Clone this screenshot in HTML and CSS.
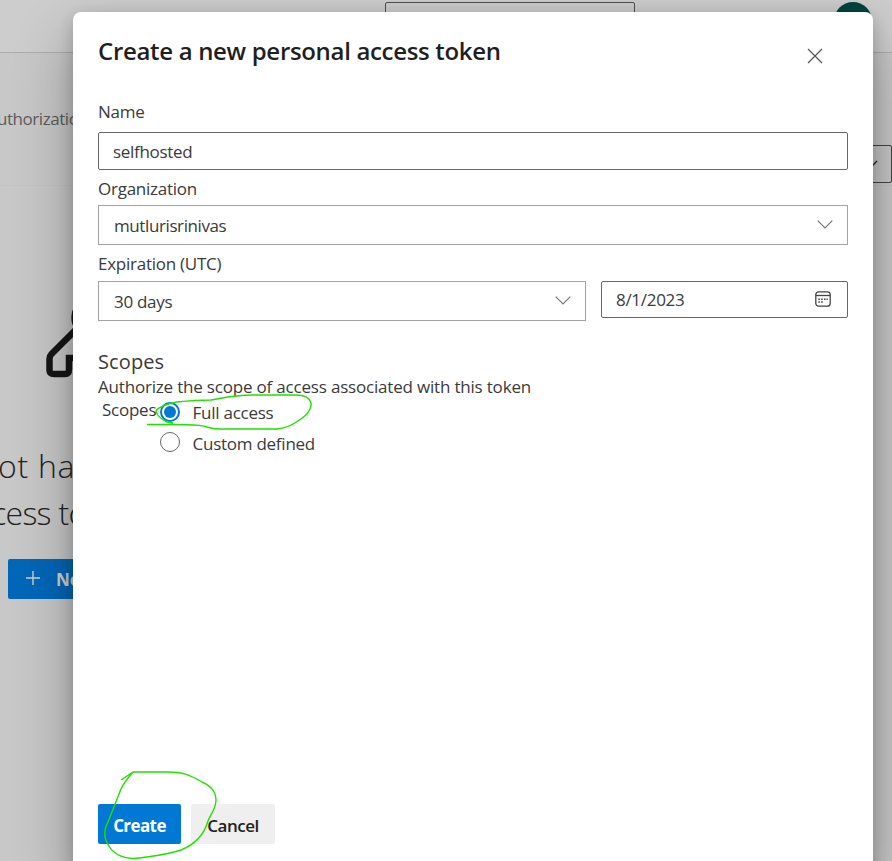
FILE: index.html
```html
<!DOCTYPE html>
<html lang="en">
<head>
<meta charset="utf-8">
<title>Create a new personal access token</title>
<link rel="stylesheet" href="styles.css">
</head>
<body>
<div class="page">
  <header class="topbar"><div class="search"></div><div class="avatar"></div></header>
  <div class="toolbar">
    <span class="crumb">uthorization</span>
    <div class="filter"><svg width="14" height="9" viewBox="0 0 14 9"><path d="M1 1l6 6 6-6"/></svg></div>
  </div>
  <main class="empty">
    <svg class="key" width="80" height="80" viewBox="0 0 80 80"><path d="M29 24C26 6 40 3 52 3s24 10 24 24-10 24-24 24h-6v9H23v11q0 5-4 5H8q-4.500 0-4.500-4V61q0-3 2-5l26-26z"/></svg>
    <p class="line first">ot have</p>
    <p class="line second">cess tokens</p>
    <div class="new"><svg width="16" height="16" viewBox="0 0 16 16"><path d="M8 1v14M1 8h14"/></svg><span>New Token</span></div>
  </main>
</div>

<section class="modal">
  <header class="head">
    <h1><span>Create a new personal access token</span></h1>
    <svg class="close" width="16" height="16" viewBox="0 0 16 16"><path d="M1 1l14 14M15 1L1 15"/></svg>
  </header>
  <div class="body">
    <div class="label name"><span>Name</span></div>
    <div class="input text"><span class="selfhosted">selfhosted</span></div>
    <div class="label org"><span>Organization</span></div>
    <div class="input select"><span class="account">mutlurisrinivas</span><svg width="16" height="9" viewBox="0 0 16 9"><path d="M.7.7L8 8l7.300-7.300"/></svg></div>
    <div class="label exp"><span>Expiration (UTC)</span></div>
    <div class="dates">
      <div class="input select days"><span>30 days</span><svg width="16" height="9" viewBox="0 0 16 9"><path d="M.7.7L8 8l7.300-7.300"/></svg></div>
      <div class="input date"><span>8/1/2023</span>
        <svg class="calendar" width="16" height="16" viewBox="0 0 16 16"><rect x=".8" y=".8" width="14.400" height="14.400" rx="2.800"/><path d="M1 4.500h14"/><path class="dots" d="M6.200 8.200h1.600M9 8.200h1.600M11.500 8.200h1.300M3.300 11h1.600M6.200 11h1.600M3.300 8.200h1.600"/></svg>
      </div>
    </div>
    <h2><span>Scopes</span></h2>
    <p class="hint"><span>Authorize the scope of access associated with this token</span></p>
    <div class="scopes">
      <span class="scope-label">Scopes</span>
      <div class="options">
        <div class="option"><i class="radio on"></i><span class="full">Full access</span></div>
        <div class="option"><i class="radio"></i><span class="custom">Custom defined</span></div>
      </div>
    </div>
  </div>
  <footer class="foot">
    <div class="btn primary"><span>Create</span></div>
    <div class="btn"><span>Cancel</span></div>
  </footer>
</section>

<svg class="ink" width="892" height="861" viewBox="0 0 892 861">
  <path d="M147 424.500H173C190 425 201 424 207 427Q213 429 219 429H277Q288 428 298 421C308 415 312 408 311 403Q309 395 296 395H252C235 395 223 398 211 400Q196 400 177 402Q160 405 156 411Q157 417 167 422L173 423"/>
  <path d="M121 780L133 772H167C183 772 190 775 202 782C213 787 216 793 216 801C215 811 210 815 208 821C204 835 196 844 181 850C167 855 152 856 139 858C126 860 114 855 109 846C103 837 104 830 108 822L121 789Q123 784 133 772"/>
</svg>
</body>
</html>
```

FILE: styles.css
```css
* { box-sizing: border-box; }
body { margin: 0; width: 892px; height: 861px; overflow: hidden; position: relative; font-family: "Open Sans", "Noto Sans", sans-serif; font-size: 16px; font-weight: 400; color: #3a3a3a; background: #c8c8c8; }
svg { display: block; fill: none; flex: none; }
p, h1, h2 { margin: 0; font-weight: 400; }
span { white-space: nowrap; }

.page { height: 861px; overflow: hidden; }
.topbar { height: 53px; display: flex; justify-content: flex-end; padding: 2px 20px 0 0; border-bottom: 1px solid #adadad; background: #cdcdcd; }
.search { width: 250px; height: 38px; margin-right: 199px; border: 1px solid #505050; border-radius: 2px; }
.avatar { width: 38px; height: 38px; border-radius: 50%; background: #00443f; }
.toolbar { height: 133px; display: flex; justify-content: space-between; align-items: flex-start; border-bottom: 1px solid #c4c4c4; }
.crumb { margin: 54px 0 0 -3px; font-size: 17px; line-height: 24px; letter-spacing: -.45px; color: #5c5c5c; }
.filter { width: 100px; height: 38px; margin-top: 92px; border: 1px solid #444; border-radius: 2px; display: flex; align-items: center; justify-content: flex-end; padding-right: 13px; }
.filter svg { stroke: #222; stroke-width: 1.3; }
.key { margin: 113px 0 -1px 46px; }
.key path { stroke: #161616; stroke-width: 6.5; }
.empty { display: flow-root; margin-top: -1px; }
.line { font-size: 32px; line-height: 47px; font-weight: 300; color: #222; white-space: nowrap; }
.first { margin: 65px 0 0 -2px; letter-spacing: .7px; }
.second { margin-left: -9px; letter-spacing: -.7px; }
.new { width: 140px; height: 40px; margin: 23px 0 0 8px; padding-left: 17px; display: flex; align-items: center; gap: 15px; background: #0067b8; color: #d0d0d0; border-radius: 2px; font-size: 17px; font-weight: 700; }
.new svg { stroke: #d0d0d0; stroke-width: 1.4; margin-bottom: 3px; }

.modal { position: absolute; left: 73px; top: 12px; width: 800px; height: 860px; padding: 0 25px; display: flex; flex-direction: column; background: #fff; border-radius: 8px; box-shadow: 0 25px 58px rgba(0,0,0,.3), 0 5px 16px rgba(0,0,0,.2); }
.head { height: 88px; display: flex; justify-content: space-between; padding: 23px 25.5px 0 0; }
h1 { font-size: 24px; line-height: 32px; font-weight: 600; color: #1f1f1f; letter-spacing: -.32px; }
.close { margin-top: 13px; stroke: #555; stroke-width: 1.2; }
.body { flex: 1; }
.label { line-height: 24px; font-size: 17px; letter-spacing: -.25px; }
.name { height: 32px; }
.org { height: 35px; padding-top: 7px; }
.exp { height: 36px; padding-top: 7px; }
.input { height: 38px; display: flex; align-items: center; justify-content: space-between; padding: 0 14px; border: 1px solid #666; border-radius: 2px; font-size: 17px; letter-spacing: -.3px; }
.select { height: 40px; padding: 0 14px 0 15px; border-color: #a3a3a3; border-radius: 0; }
.select svg { stroke: #777; stroke-width: 1.2; margin-bottom: 2px; }
.account { letter-spacing: -.4px; }
.dates { display: flex; gap: 15px; }
.days { width: 488px; }
.date { flex: 1; height: 37px; padding-right: 16px; }
.calendar { stroke: #444; stroke-width: 1.3; margin-bottom: 1px; }
.dots { stroke-width: 1.5; }
h2 { margin-top: 27px; font-size: 20px; line-height: 28px; letter-spacing: .1px; }
.hint { margin-top: -1px; font-size: 17px; line-height: 24px; letter-spacing: -.19px; }
.scopes { display: flex; padding-left: 4px; font-size: 17px; letter-spacing: -.25px; }
.scope-label { width: 58px; line-height: 24px; margin-top: -1px; }
.options { padding-top: 3px; }
.option { height: 30px; display: flex; align-items: flex-start; gap: 12.5px; line-height: 24px; }
.full { margin-top: -1px; }
.radio { width: 20px; height: 20px; border: 1px solid #666; border-radius: 50%; }
.radio.on { border: 2px solid #0078d4; background: #0078d4; background-clip: content-box; padding: 2px; }
.foot { height: 68px; display: flex; gap: 10px; }
.btn { width: 84px; height: 40px; display: flex; align-items: center; justify-content: center; padding-top: 3px; border-radius: 2px; background: #efefef; color: #222; font-size: 17px; font-weight: 600; letter-spacing: -.5px; }
.primary { width: 83px; background: #0078d4; color: #fff; font-weight: 700; letter-spacing: -.6px; }
.ink { position: absolute; left: 0; top: 0; pointer-events: none; stroke: #22e000; stroke-width: 1.4; stroke-linejoin: round; }
```
